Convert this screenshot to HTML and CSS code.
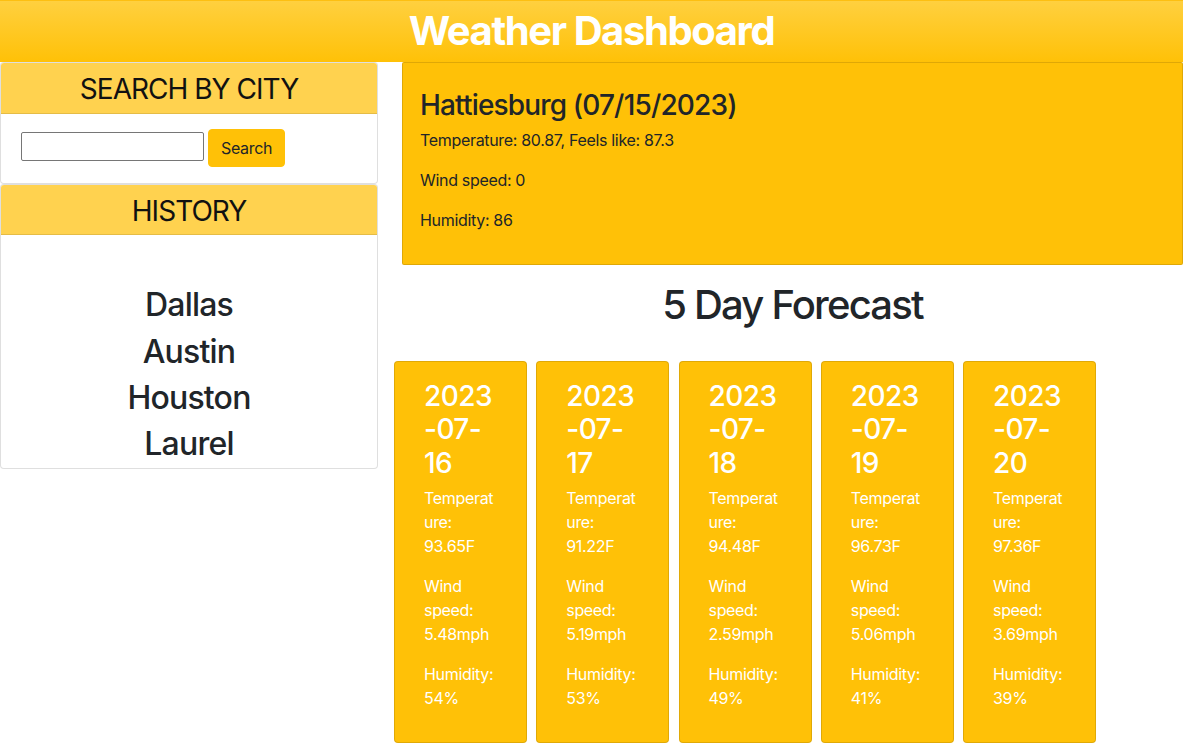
FILE: index.html
```html
<!DOCTYPE html>
<html lang="en">
<head>
<meta charset="utf-8">
<title>Weather Dashboard</title>
<link rel="stylesheet" href="styles.css">
</head>
<body>
<div class="page">
  <header class="topbar">
    <h1 class="topbar-title">Weather Dashboard</h1>
  </header>
  <main class="layout">
    <aside class="sidebar">
      <section class="card">
        <h3 class="card-header">SEARCH BY CITY</h3>
        <div class="search-body">
          <input class="search-input" type="text">
          <button class="search-btn" type="button">Search</button>
        </div>
      </section>
      <section class="card">
        <h3 class="card-header">HISTORY</h3>
        <ul class="history-list">
          <li class="history-item">Dallas</li>
          <li class="history-item">Austin</li>
          <li class="history-item">Houston</li>
          <li class="history-item">Laurel</li>
        </ul>
      </section>
    </aside>
    <section class="content">
      <div class="current">
        <h3 class="current-title">Hattiesburg (07/15/2023)</h3>
        <p class="current-line">Temperature: 80.87, Feels like: 87.3</p>
        <p class="current-line">Wind speed: 0</p>
        <p class="current-line">Humidity: 86</p>
      </div>
      <h1 class="forecast-title">5 Day Forecast</h1>
      <div class="forecast-row">
        <div class="day">
          <h3 class="day-date">2023-07-16</h3>
          <p class="day-line">Temperature: 93.65F</p>
          <p class="day-line">Wind speed: 5.48mph</p>
          <p class="day-line">Humidity: 54%</p>
        </div>
        <div class="day">
          <h3 class="day-date">2023-07-17</h3>
          <p class="day-line">Temperature: 91.22F</p>
          <p class="day-line">Wind speed: 5.19mph</p>
          <p class="day-line">Humidity: 53%</p>
        </div>
        <div class="day">
          <h3 class="day-date">2023-07-18</h3>
          <p class="day-line">Temperature: 94.48F</p>
          <p class="day-line">Wind speed: 2.59mph</p>
          <p class="day-line">Humidity: 49%</p>
        </div>
        <div class="day">
          <h3 class="day-date">2023-07-19</h3>
          <p class="day-line">Temperature: 96.73F</p>
          <p class="day-line">Wind speed: 5.06mph</p>
          <p class="day-line">Humidity: 41%</p>
        </div>
        <div class="day">
          <h3 class="day-date">2023-07-20</h3>
          <p class="day-line">Temperature: 97.36F</p>
          <p class="day-line">Wind speed: 3.69mph</p>
          <p class="day-line">Humidity: 39%</p>
        </div>
      </div>
    </section>
  </main>
</div>
</body>
</html>
```

FILE: styles.css
```css
* { box-sizing: border-box; }

html, body {
  margin: 0;
  padding: 0;
  background: #fff;
}

body {
  font-family: Inter, "Noto Sans", "Liberation Sans", sans-serif;
  font-size: 16px;
  line-height: 1.5;
  color: #212529;
}

.page {
  width: 1183px;
}

.topbar {
  height: 62px;
  background: linear-gradient(180deg, #ffd03f 0%, #ffc107 100%);
  border-top: 1px solid #fdbf12;
  display: flex;
  align-items: center;
  justify-content: center;
}

.topbar-title {
  margin: 0;
  font-size: 40px;
  font-weight: 700;
  line-height: 1;
  letter-spacing: -0.035em;
  color: #fff;
  padding-bottom: 2px;
}

.layout {
  display: flex;
  gap: 24px;
  align-items: flex-start;
}

.sidebar {
  width: 378px;
  flex: none;
  display: flex;
  flex-direction: column;
}

.card {
  border: 1px solid rgba(0, 0, 0, 0.125);
  border-radius: 4px;
  background: #fff;
  overflow: hidden;
}

.card-header {
  margin: 0;
  padding: 10px 16px 6px;
  background: #ffd24f;
  border-bottom: 1px solid rgba(0, 0, 0, 0.1);
  font-size: 28px;
  font-weight: 400;
  line-height: 1.2;
  letter-spacing: -0.035em;
  text-align: center;
  color: #111;
}

.search-body {
  padding: 15px 20px 16px;
  display: flex;
  align-items: center;
  gap: 4px;
}

.search-input {
  width: 183px;
  height: 29px;
  border: 1px solid #767676;
  border-radius: 2px;
  margin: -2px 0 0;
  padding: 1px 2px;
  font: inherit;
}

.search-btn {
  height: 38px;
  padding: 6px 12px;
  border: 1px solid #ffc107;
  border-radius: 4px;
  background: #ffc107;
  font-family: inherit;
  font-size: 16px;
  line-height: 24px;
  letter-spacing: -0.02em;
  color: #212529;
}

.history-list {
  list-style: none;
  margin: 0;
  padding: 51px 0 0;
}

.history-item {
  font-size: 32px;
  font-weight: 500;
  line-height: 1.2;
  letter-spacing: -0.025em;
  margin: 0 0 8px;
  text-align: center;
}

.history-item:last-child {
  margin-bottom: 4px;
}

.content {
  width: 781px;
  flex: none;
}

.current {
  background: #ffc107;
  border: 1px solid rgba(0, 0, 0, 0.125);
  border-radius: 2px;
  padding: 26px 17px 16px;
}

.current-title {
  margin: 0 0 5px;
  font-size: 28px;
  font-weight: 500;
  line-height: 1.2;
  letter-spacing: -0.03em;
}

.current-line {
  margin: 0 0 16px;
  font-size: 16px;
  letter-spacing: -0.02em;
}

.forecast-title {
  margin: 16px 0 32px;
  font-size: 40px;
  font-weight: 500;
  line-height: 1.2;
  letter-spacing: -0.045em;
  text-align: center;
}

.forecast-row {
  display: flex;
  gap: 9.25px;
  margin-left: -8px;
}

.day {
  width: 133px;
  flex: none;
  height: 382px;
  background: #ffc107;
  border: 1px solid rgba(0, 0, 0, 0.12);
  border-radius: 4px;
  padding: 18px 28px 16px 29px;
  color: #fff;
  overflow-wrap: break-word;
  word-wrap: break-word;
}

.day-date {
  margin: 0 0 6px;
  font-size: 28px;
  font-weight: 500;
  line-height: 1.2;
  letter-spacing: -0.02em;
}

.day-line {
  margin: 0 0 16px;
  font-size: 16px;
  letter-spacing: -0.02em;
}
```
